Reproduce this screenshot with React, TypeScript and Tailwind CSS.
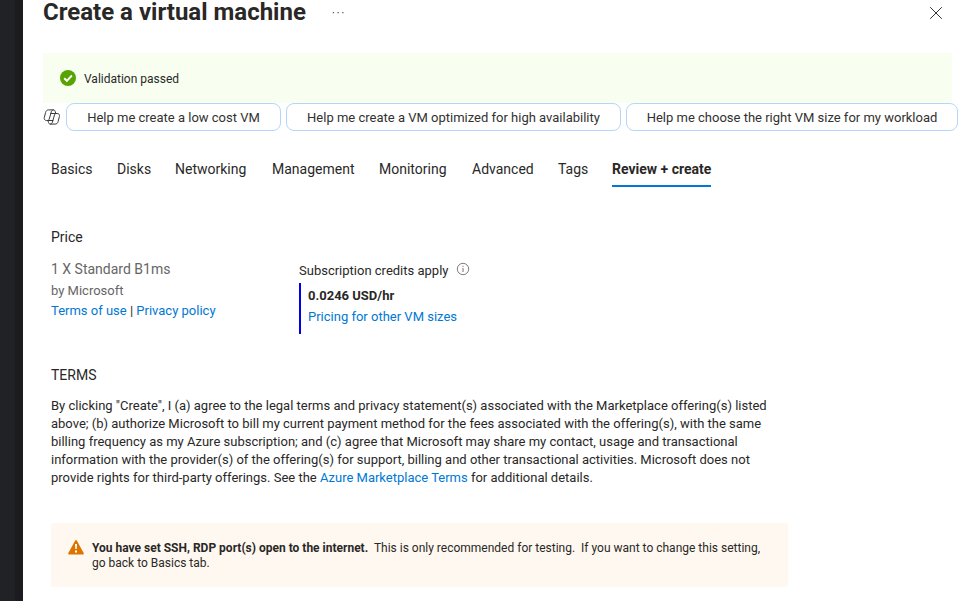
import React from "react";

const tabs: { label: string; width: string }[] = [
  { label: "Basics", width: "w-[66px]" },
  { label: "Disks", width: "w-[58px]" },
  { label: "Networking", width: "w-[97px]" },
  { label: "Management", width: "w-[107px]" },
  { label: "Monitoring", width: "w-[93px]" },
  { label: "Advanced", width: "w-[86px]" },
  { label: "Tags", width: "w-[54px]" },
];

const suggestions: { label: string; width: string }[] = [
  { label: "Help me create a low cost VM", width: "w-[215px]" },
  { label: "Help me create a VM optimized for high availability", width: "w-[335px]" },
  { label: "Help me choose the right VM size for my workload", width: "w-[332px]" },
];

function CopilotIcon() {
  return (
    <svg width="17" height="16" viewBox="-0.6 0 17 16" fill="none" stroke="#3b3a39" strokeWidth="1" strokeLinejoin="round" strokeLinecap="round">
      <path d="M5.200 11.500H3C1.200 11.500.2 10.200.7 8.500L2 3.500C2.500 1.700 3.400.9 5 .9h4.700c1.100 0 1.600.6 1.900 1.600l.6 1.900" />
      <path d="M11.300 4.500H13.500c1.800 0 2.800 1.300 2.300 3L14.500 12.500c-.5 1.800-1.400 2.600-3 2.600H6.800c-1.100 0-1.600-.6-1.900-1.600l-.6-1.900" />
      <path d="M9.600.9C8.600 1 8 1.800 7.700 2.800L5.600 10.200C5.300 11.100 4.700 11.500 3.800 11.500" />
      <path d="M6.900 15.100C7.900 15 8.500 14.200 8.800 13.200L10.900 5.800C11.200 4.900 11.800 4.500 12.700 4.500" />
      <path d="M7.200 4.500h4.100M5.200 11.500h4.100" />
    </svg>
  );
}

export default function App() {
  return (
    <div className="flex h-[601px] w-[968px] overflow-hidden bg-white font-[Roboto,sans-serif] text-[13px] text-[#292827]">
      <div className="w-[23px] shrink-0 border-r-8 border-[#1c1b20] bg-[#212225]" />
      <main className="min-w-0 flex-1 pl-5">
        <header className="flex h-[53px] items-start">
          <h1 className="w-[289px] whitespace-nowrap text-2xl leading-6 font-bold">Create a virtual machine</h1>
          <svg className="mt-3" width="12" height="2" fill="#605e5c">
            <path d="M.8 0h1.300v1.300H.8zM5.500 0h1.300v1.300H5.500zM10.200 0h1.300v1.300H10.200z" />
          </svg>
          <svg className="mt-[7px] mr-[26px] ml-auto" width="12" height="12" stroke="#323130" strokeWidth="1">
            <path d="M.2.2l11.600 11.600M11.800.2L.2 11.800" />
          </svg>
        </header>

        <div className="flex h-[50px] w-[909px] items-center gap-2 bg-[#f8fff0] pl-[17px] text-xs">
          <svg width="16" height="16" viewBox="0 0 16 16">
            <circle cx="8" cy="8" r="8" fill="#57a300" />
            <path d="M4.200 8.200l2.700 2.600 5-5.300" fill="none" stroke="#fff" strokeWidth="1.900" />
          </svg>
          <span className="pt-0.5">Validation passed</span>
        </div>

        <div className="flex h-7 items-center gap-[5px] text-[#323130]">
          <div className="mr-0.5 w-4 shrink-0">
            <CopilotIcon />
          </div>
          {suggestions.map((s) => (
            <button key={s.label} className={`${s.width} h-7 shrink-0 rounded-lg border border-[#b4d6fa] bg-white pt-0.5 whitespace-nowrap`}>
              {s.label}
            </button>
          ))}
        </div>

        <nav className="mt-[27px] ml-2 flex h-[29px] text-sm leading-[22px]">
          {tabs.map((t) => (
            <span key={t.label} className={`${t.width} shrink-0`}>{t.label}</span>
          ))}
          <span className="w-[99px] shrink-0 border-b-2 border-[#0078d4] font-bold whitespace-nowrap">Review + create</span>
        </nav>

        <section className="ml-2 pt-10">
          <h2 className="text-sm leading-5">Price</h2>
          <div className="mt-3 flex">
            <div className="w-[248px] text-[#666666]">
              <p className="text-sm leading-5">1 X Standard B1ms</p>
              <p className="mt-0.5 leading-5">by Microsoft</p>
              <p className="leading-5 text-[#292827]">
                <a className="text-[#0078d4]">Terms of use</a> | <a className="text-[#0078d4]">Privacy policy</a>
              </p>
            </div>
            <div className="pt-0.5">
              <div className="flex h-[22px] items-start leading-5">
                Subscription credits apply
                <svg className="mt-px ml-2" width="14" height="14" viewBox="0 0 14 14" fill="none" stroke="#605e5c">
                  <circle cx="7" cy="7" r="5.700" strokeWidth=".8" />
                  <path d="M7 6v4M7 3.800v1.100" strokeWidth=".9" />
                </svg>
              </div>
              <div className="h-[51px] border-l-2 border-[#0000ee] pt-0.5 pl-[7px]">
                <p className="leading-[21px] font-bold">0.0246 USD/hr</p>
                <a className="block leading-[21px] text-[#0078d4]">Pricing for other VM sizes</a>
              </div>
            </div>
          </div>
        </section>

        <section className="mt-[31px] ml-2">
          <h2 className="text-sm leading-5">TERMS</h2>
          <p className="mt-3 leading-[18px] whitespace-nowrap">
            By clicking "Create", I (a) agree to the legal terms and privacy statement(s) associated with the Marketplace offering(s) listed<br />
            above; (b) authorize Microsoft to bill my current payment method for the fees associated with the offering(s), with the same<br />
            billing frequency as my Azure subscription; and (c) agree that Microsoft may share my contact, usage and transactional<br />
            information with the provider(s) of the offering(s) for support, billing and other transactional activities. Microsoft does not<br />
            provide rights for third-party offerings. See the <a className="text-[#0078d4]">Azure Marketplace Terms</a> for additional details.
          </p>
        </section>

        <div className="mt-9 ml-2 flex h-16 w-[737px] rounded-xs bg-[#fff8f0] pt-[17px] pl-[17px] text-xs leading-[15px]">
          <svg className="mr-2 shrink-0" width="16" height="15" viewBox="0 0 16 15">
            <path d="M7.200.4Q8-.4 8.800.4L15.800 13.200Q16 14.500 15 14.500H1Q0 14.500.2 13.200Z" fill="#db7500" />
            <path d="M7 4h2l-.3 5H7.300zM7 10.500h2v2H7z" fill="#fff" />
          </svg>
          <p className="pt-px whitespace-nowrap">
            <strong className="font-bold">You have set SSH, RDP port(s) open to the internet.</strong>&nbsp; This is only recommended for testing.&nbsp; If you want to change this setting,<br />
            go back to Basics tab.
          </p>
        </div>
      </main>
    </div>
  );
}
